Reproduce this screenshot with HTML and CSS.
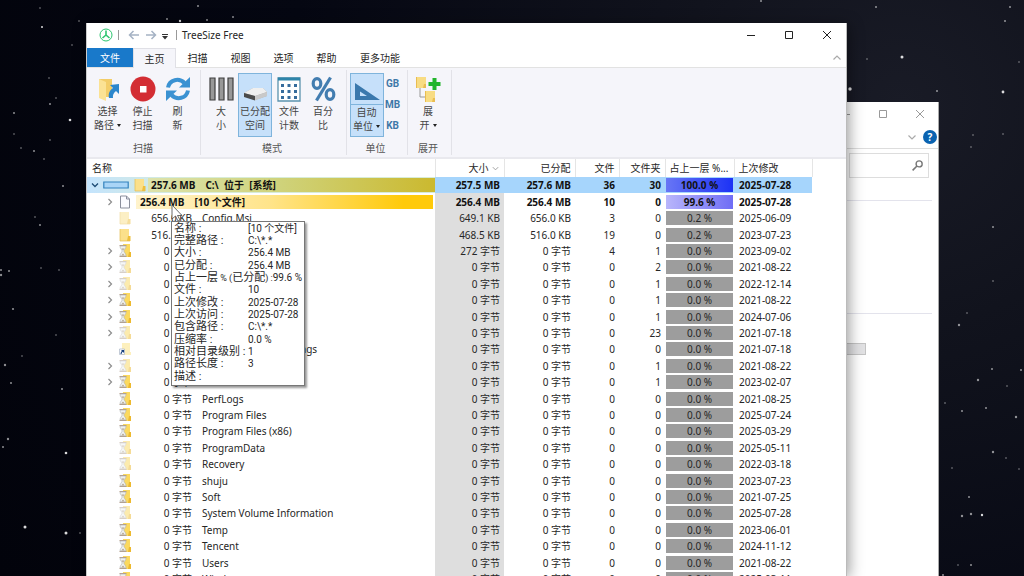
FILE: index.html
```html
<!DOCTYPE html>
<html lang="zh-CN">
<head>
<meta charset="utf-8">
<title>TreeSize Free</title>
<link rel="stylesheet" href="styles.css">
</head>
<body>
<svg class="defs" width="0" height="0" aria-hidden="true">
  <symbol id="folder" viewBox="0 0 12 14"><path d="M1 1h9v12H1z" fill="#fbe08a"/><path d="M9 8h2.500v5H8z" fill="#eebf3c"/><path d="M1 1v12h10" fill="none" stroke="#e5bd50" stroke-width=".7"/></symbol>
  <symbol id="wait" viewBox="0 0 14 14"><path d="M5 0h7v9h1v4H4z" fill="#fbd95f"/><path d="M11 8h2v5h-3z" fill="#edb92f"/><path d="M1.500 1.500h7M1.500 12.500h7" stroke="#b49c88" stroke-width="1"/><path d="M2 2h6c0 2.500-1.800 3.500-2.200 5C6.200 8.500 8 9.500 8 12H2c0-2.500 1.800-3.500 2.200-5C3.800 5.500 2 4.500 2 2z" fill="#eef0f0" stroke="#abb0b0" stroke-width=".6"/><path d="M3.500 4.500h3L5 6.500zM3.300 11.500L5 9.500l1.700 2z" fill="#b5a590"/></symbol>
  <symbol id="page" viewBox="0 0 12 14"><path d="M1.500 1h6l3 3v9h-9z" fill="#fbfbff" stroke="#8b8f9c"/><path d="M7.500 1v3h3" fill="none" stroke="#8b8f9c"/></symbol>
  <symbol id="link" viewBox="0 0 14 14"><path d="M4 1h8v9h1v3H4z" fill="#fdf0be"/><path d="M1.500 7h5v5.500h-5z" fill="#fff" stroke="#a9b5c5" stroke-width=".7"/><path d="M3 12c0-2 .5-2.500 2-3M3.500 8.500h2v2" fill="none" stroke="#17407f" stroke-width="1.100"/></symbol>
  <symbol id="chev" viewBox="0 0 10 10"><path d="M3.500 2l3 3-3 3" fill="none" stroke="#8d8d8d" stroke-width="1.200"/></symbol>
  <symbol id="min" viewBox="0 0 10 10"><path d="M1 5.500h8" stroke="currentColor"/></symbol>
  <symbol id="max" viewBox="0 0 10 10"><path d="M1.500 1.500h7v7h-7z" fill="none" stroke="currentColor"/></symbol>
  <symbol id="close" viewBox="0 0 10 10"><path d="M1 1l8 8M9 1L1 9" stroke="currentColor"/></symbol>
</svg>

<div class="desktop">
<svg class="stars" aria-hidden="true" fill="#fff">
  <g opacity=".85"><circle cx="42" cy="27" r="1"/><circle cx="70" cy="120" r="1.300"/><circle cx="66" cy="453" r="1.300"/><circle cx="25" cy="527" r="1.500"/><circle cx="66" cy="533" r="1.500"/><circle cx="180" cy="21" r="1.200"/><circle cx="902" cy="57" r="1.500"/><circle cx="850" cy="89" r="1.700"/><circle cx="1003" cy="92" r="1.400"/><circle cx="982" cy="515" r="1.200"/></g>
  <g opacity=".55"><circle cx="14" cy="113" r="1"/><circle cx="50" cy="104" r="1"/><circle cx="50" cy="140" r=".8"/><circle cx="34" cy="151" r="1"/><circle cx="21" cy="148" r=".8"/><circle cx="44" cy="159" r=".8"/><circle cx="63" cy="186" r="1"/><circle cx="35" cy="217" r=".8"/><circle cx="40" cy="225" r="1"/><circle cx="9" cy="271" r="1"/><circle cx="1" cy="270" r="1"/><circle cx="1" cy="275" r="1.200"/><circle cx="13" cy="309" r="1.100"/><circle cx="5" cy="365" r="1.200"/><circle cx="11" cy="383" r="1"/><circle cx="62" cy="389" r="1"/><circle cx="8" cy="439" r="1.200"/><circle cx="3" cy="447" r="1"/><circle cx="80" cy="533" r=".8"/><circle cx="79" cy="21" r=".8"/><circle cx="167" cy="19" r="1"/><circle cx="198" cy="6" r="1"/><circle cx="207" cy="20" r="1"/><circle cx="233" cy="17" r="1"/><circle cx="761" cy="1" r="1"/><circle cx="876" cy="7" r="1"/><circle cx="1010" cy="7" r="1"/><circle cx="1005" cy="21" r="1"/><circle cx="937" cy="91" r="1"/><circle cx="993" cy="227" r="1"/><circle cx="993" cy="281" r=".8"/><circle cx="959" cy="325" r="1.200"/><circle cx="992" cy="369" r="1"/><circle cx="1021" cy="370" r="1"/><circle cx="978" cy="380" r="1.200"/><circle cx="945" cy="403" r=".8"/><circle cx="962" cy="411" r="1"/><circle cx="986" cy="408" r="1"/><circle cx="1016" cy="417" r="1.200"/><circle cx="993" cy="452" r="1.200"/><circle cx="969" cy="497" r="1"/><circle cx="962" cy="516" r="1.200"/><circle cx="971" cy="514" r="1.200"/><circle cx="971" cy="565" r="1"/><circle cx="943" cy="575" r="1"/></g>
  <g opacity=".3"><circle cx="14" cy="134" r="1"/><circle cx="56" cy="98" r="1"/><circle cx="49" cy="78" r="1"/><circle cx="72" cy="45" r="1"/><circle cx="41" cy="268" r="1"/><circle cx="59" cy="270" r="1"/><circle cx="56" cy="335" r="1"/><circle cx="22" cy="356" r="1"/><circle cx="40" cy="8" r="1"/><circle cx="867" cy="59" r="1"/><circle cx="973" cy="135" r="1"/><circle cx="1003" cy="134" r="1"/><circle cx="971" cy="147" r="1"/><circle cx="1019" cy="62" r="1"/><circle cx="967" cy="313" r="1"/><circle cx="1007" cy="386" r="1"/><circle cx="952" cy="468" r="1"/><circle cx="1006" cy="458" r="1"/><circle cx="958" cy="565" r="1"/><circle cx="1019" cy="469" r="1"/></g>
</svg>

<section class="window explorer" aria-label="资源管理器">
  <div class="explorer-title">
    <button class="win-btn" aria-label="最小化"><svg><use href="#min"/></svg></button>
    <button class="win-btn" aria-label="最大化"><svg><use href="#max"/></svg></button>
    <button class="win-btn" aria-label="关闭"><svg><use href="#close"/></svg></button>
  </div>
  <div class="explorer-tools">
    <svg class="tiny" viewBox="0 0 10 10"><path d="M1.500 3.500L5 7l3.500-3.500" fill="none" stroke="#aaa" stroke-width="1.200"/></svg>
    <button class="help" aria-label="帮助">?</button>
  </div>
  <div class="explorer-search">
    <label class="search-box"><input type="text" aria-label="搜索"><svg viewBox="0 0 12 12"><circle cx="7.500" cy="4.500" r="2.800" fill="none" stroke="#777" stroke-width="1.300"/><path d="M5.500 6.500L1.500 10.500" stroke="#777" stroke-width="1.500"/></svg></label>
  </div>
  <div class="pane pane-top"></div>
  <div class="pane pane-mid"></div>
  <div class="pane-block"></div>
</section>

<main class="window treesize">
  <header class="titlebar">
    <svg class="logo" viewBox="0 0 14 14" fill="none" stroke="#2cc56f"><circle cx="7" cy="7" r="6"/><path d="M7 2.500V7l-3.500 3M7 7l3.500 3" stroke-width="1.600"/></svg>
    <span class="sep"></span>
    <button class="nav" aria-label="后退"><svg viewBox="0 0 12 10"><path d="M11 5H1.500M5.500 1L1.500 5l4 4" fill="none" stroke="#a5b2c4" stroke-width="1.500"/></svg></button>
    <button class="nav" aria-label="前进"><svg viewBox="0 0 12 10"><path d="M1 5h9.500M6.500 1l4 4-4 4" fill="none" stroke="#a5b2c4" stroke-width="1.500"/></svg></button>
    <button class="quick" aria-label="自定义快速访问"><svg viewBox="0 0 6 6"><path d="M0 .5h6" stroke="#333"/><path d="M0 2h6L3 5.500z" fill="#333"/></svg></button>
    <span class="sep"></span>
    <h1 class="app-name">TreeSize Free</h1>
    <div class="win-btns">
      <button class="win-btn" aria-label="最小化"><svg><use href="#min"/></svg></button>
      <button class="win-btn" aria-label="最大化"><svg><use href="#max"/></svg></button>
      <button class="win-btn" aria-label="关闭"><svg><use href="#close"/></svg></button>
    </div>
  </header>
  <nav class="tabs">
    <button class="tab file">文件</button>
    <button class="tab active">主页</button>
    <button class="tab">扫描</button>
    <button class="tab">视图</button>
    <button class="tab">选项</button>
    <button class="tab">帮助</button>
    <button class="tab wide">更多功能</button>
    <button class="collapse" aria-label="折叠功能区"><svg class="tiny" viewBox="0 0 10 10"><path d="M1.500 6.500L5 3l3.500 3.500" fill="none" stroke="#aaa" stroke-width="1.200"/></svg></button>
  </nav>
  <div class="ribbon">
    <div class="group scan">
      <div class="tools">
        <button class="tool"><svg viewBox="0 0 26 26"><path d="M4 3h13v18H4z" fill="#f3cd68"/><path d="M4 3l7 3v19l-7-3z" fill="#fbe294"/><path d="M24 8v10l-3-3c-2.500 2-3.500 4-3 7h-4c-1-5 1-8 4-10l-3-3z" fill="#2b86cc"/></svg><span>选择<br>路径<i class="drop"></i></span></button>
        <button class="tool"><svg viewBox="0 0 26 26"><circle cx="13" cy="13" r="12.500" fill="#d32d33"/><path d="M10 10h6.500v6.500H10z" fill="#fff"/></svg><span>停止<br>扫描</span></button>
        <button class="tool"><svg viewBox="0 0 26 26"><g fill="none" stroke="#3b92d2" stroke-width="4"><path d="M3 11.500C4.500 3.500 14 1.500 19.500 7"/><path d="M23 14.500C21.500 22.500 12 24.500 6.500 19"/></g><path d="M25 1v10.500H14zM1 25V14.500h11z" fill="#3b92d2"/></svg><span>刷<br>新</span></button>
      </div>
      <div class="caption">扫描</div>
    </div>
    <div class="group mode">
      <div class="tools">
        <button class="tool"><svg viewBox="0 0 26 26"><g fill="#989898" stroke="#3f3f3f" stroke-width="1.200"><path d="M2 2h5v22H2zM11 2h5v22h-5zM20 2h5v22h-5z"/></g></svg><span>大<br>小</span></button>
        <button class="tool on"><svg viewBox="0 0 26 26"><path d="M2 17l9-5h10l4 4v4l-12 4-11-4z" fill="#a8a8a8"/><path d="M2 17l9-5h10l4 4-12 4z" fill="#efefef"/><path d="M2 17l11 3v4.500L2 21z" fill="#4b4b4b"/><path d="M13 20l12-4v4l-12 4.500z" fill="#c9c9c9"/></svg><span>已分配<br>空间</span></button>
        <button class="tool"><svg viewBox="0 0 26 26"><path d="M2 2h22v23H2z" fill="#fff" stroke="#5b93ae" stroke-width="1.300"/><path d="M2 1.500h22v3H2z" fill="#2e84a9"/><path d="M5 8h3v3H5zM11.500 8h3v3h-3zM18 8h3v3h-3zM5 14h3v3H5zM11.500 14h3v3h-3zM18 14h3v3h-3zM5 20h3v3H5zM11.500 20h3v3h-3zM18 20h3v3h-3z" fill="#366c9c"/></svg><span>文件<br>计数</span></button>
        <button class="tool"><svg viewBox="0 0 26 26"><g fill="none" stroke="#437db0" stroke-width="3.200"><ellipse cx="7" cy="7.500" rx="3.800" ry="4.800"/><ellipse cx="20" cy="18.500" rx="3.800" ry="4.800"/><path d="M20.500 1.500L6.500 24.500"/></g></svg><span>百分<br>比</span></button>
      </div>
      <div class="caption">模式</div>
    </div>
    <div class="group unit">
      <div class="tools">
        <button class="tool on split"><svg viewBox="0 0 26 26"><path d="M1 7l25 17H1zM6 15.500v4.500h7z" fill="#3a78ad" fill-rule="evenodd"/></svg><span>自动<br>单位<i class="drop"></i></span></button>
        <div class="units"><button>GB</button><button>MB</button><button>KB</button></div>
      </div>
      <div class="caption">单位</div>
    </div>
    <div class="group expand">
      <div class="tools">
        <button class="tool"><svg viewBox="0 0 26 26"><path d="M5 12v9h5" fill="none" stroke="#999"/><path d="M1 1h10v11H1z" fill="#f8dc83"/><path d="M9 8h2v4H8zM1 1h1v11H1z" fill="#e9bd52"/><path d="M10 15h10v11H10z" fill="#f8dc83"/><path d="M18 22h2v4h-3zM10 15h1v11h-1z" fill="#e9bd52"/><path d="M17.500 2h4v4h4v4h-4v4h-4v-4h-4V6h4z" fill="#22b52c"/></svg><span>展<br>开<i class="drop"></i></span></button>
      </div>
      <div class="caption">展开</div>
    </div>
  </div>

  <div class="list">
  <table class="grid">
    <colgroup><col><col class="c-size"><col class="c-alloc"><col class="c-files"><col class="c-dirs"><col class="c-pct"><col class="c-date"><col class="c-rest"></colgroup>
    <thead><tr><th class="left">名称</th><th>大小<svg class="sort" viewBox="0 0 10 10"><path d="M2 3.500l3 3 3-3" fill="none" stroke="#999"/></svg></th><th>已分配</th><th>文件</th><th>文件夹</th><th class="left">占上一层 %...</th><th class="left">上次修改</th><th></th></tr></thead>
    <tbody>
    <tr class="root bold"><td><div class="tree"><svg class="chev" viewBox="0 0 10 10"><path d="M2 3.500l3 3 3-3" fill="none" stroke="#1d4b75" stroke-width="1.300"/></svg><svg class="drive" viewBox="0 0 26 8"><path d="M.8 7V1h24.400v6z" fill="#a9d5f7" stroke="#3282bd" stroke-width="1.200"/></svg><svg class="ico"><use href="#folder"/></svg><div class="bar"><span>257.6 MB</span><span>C:\&nbsp; 位于&nbsp; [系统]</span></div></div></td><td>257.5 MB</td><td>257.6 MB</td><td>36</td><td>30</td><td class="pct"><div>100.0 %</div></td><td>2025-07-28</td><td></td></tr>
    <tr class="files bold"><td><div class="tree"><svg class="chev"><use href="#chev"/></svg><svg class="ico"><use href="#page"/></svg><div class="bar"><span>256.4 MB</span><span>[10 个文件]</span></div></div></td><td>256.4 MB</td><td>256.4 MB</td><td>10</td><td>0</td><td class="pct"><div>99.6 %</div></td><td>2025-07-28</td><td></td></tr>
    <tr><td><div class="tree"><i class="chev"></i><svg class="ico faded"><use href="#folder"/></svg><span class="amt">656.0 KB</span><span>Config.Msi</span></div></td><td>649.1 KB</td><td>656.0 KB</td><td>3</td><td>0</td><td class="pct"><div>0.2 %</div></td><td>2025-06-09</td><td></td></tr>
    <tr><td><div class="tree"><i class="chev"></i><svg class="ico"><use href="#folder"/></svg><span class="amt">516.0 KB</span></div></td><td>468.5 KB</td><td>516.0 KB</td><td>19</td><td>0</td><td class="pct"><div>0.2 %</div></td><td>2023-07-23</td><td></td></tr>
    <tr><td><div class="tree"><svg class="chev"><use href="#chev"/></svg><svg class="ico"><use href="#wait"/></svg><span class="amt">0 字节</span></div></td><td>272 字节</td><td>0 字节</td><td>4</td><td>1</td><td class="pct"><div>0.0 %</div></td><td>2023-09-02</td><td></td></tr>
    <tr><td><div class="tree"><svg class="chev"><use href="#chev"/></svg><svg class="ico faded"><use href="#wait"/></svg><span class="amt">0 字节</span></div></td><td>0 字节</td><td>0 字节</td><td>0</td><td>2</td><td class="pct"><div>0.0 %</div></td><td>2021-08-22</td><td></td></tr>
    <tr><td><div class="tree"><svg class="chev"><use href="#chev"/></svg><svg class="ico faded"><use href="#wait"/></svg><span class="amt">0 字节</span></div></td><td>0 字节</td><td>0 字节</td><td>0</td><td>1</td><td class="pct"><div>0.0 %</div></td><td>2022-12-14</td><td></td></tr>
    <tr><td><div class="tree"><svg class="chev"><use href="#chev"/></svg><svg class="ico"><use href="#wait"/></svg><span class="amt">0 字节</span></div></td><td>0 字节</td><td>0 字节</td><td>0</td><td>1</td><td class="pct"><div>0.0 %</div></td><td>2021-08-22</td><td></td></tr>
    <tr><td><div class="tree"><svg class="chev"><use href="#chev"/></svg><svg class="ico"><use href="#wait"/></svg><span class="amt">0 字节</span></div></td><td>0 字节</td><td>0 字节</td><td>0</td><td>1</td><td class="pct"><div>0.0 %</div></td><td>2024-07-06</td><td></td></tr>
    <tr><td><div class="tree"><svg class="chev"><use href="#chev"/></svg><svg class="ico faded"><use href="#wait"/></svg><span class="amt">0 字节</span></div></td><td>0 字节</td><td>0 字节</td><td>0</td><td>23</td><td class="pct"><div>0.0 %</div></td><td>2021-07-18</td><td></td></tr>
    <tr><td><div class="tree"><i class="chev"></i><svg class="ico"><use href="#link"/></svg><span class="amt">0 字节</span><span>Documents and Settings</span></div></td><td>0 字节</td><td>0 字节</td><td>0</td><td>0</td><td class="pct"><div>0.0 %</div></td><td>2021-07-18</td><td></td></tr>
    <tr><td><div class="tree"><svg class="chev"><use href="#chev"/></svg><svg class="ico faded"><use href="#wait"/></svg><span class="amt">0 字节</span></div></td><td>0 字节</td><td>0 字节</td><td>0</td><td>1</td><td class="pct"><div>0.0 %</div></td><td>2021-08-22</td><td></td></tr>
    <tr><td><div class="tree"><svg class="chev"><use href="#chev"/></svg><svg class="ico"><use href="#wait"/></svg><span class="amt">0 字节</span></div></td><td>0 字节</td><td>0 字节</td><td>0</td><td>1</td><td class="pct"><div>0.0 %</div></td><td>2023-02-07</td><td></td></tr>
    <tr><td><div class="tree"><i class="chev"></i><svg class="ico"><use href="#wait"/></svg><span class="amt">0 字节</span><span>PerfLogs</span></div></td><td>0 字节</td><td>0 字节</td><td>0</td><td>0</td><td class="pct"><div>0.0 %</div></td><td>2021-08-25</td><td></td></tr>
    <tr><td><div class="tree"><i class="chev"></i><svg class="ico"><use href="#wait"/></svg><span class="amt">0 字节</span><span>Program Files</span></div></td><td>0 字节</td><td>0 字节</td><td>0</td><td>0</td><td class="pct"><div>0.0 %</div></td><td>2025-07-24</td><td></td></tr>
    <tr><td><div class="tree"><i class="chev"></i><svg class="ico"><use href="#wait"/></svg><span class="amt">0 字节</span><span>Program Files (x86)</span></div></td><td>0 字节</td><td>0 字节</td><td>0</td><td>0</td><td class="pct"><div>0.0 %</div></td><td>2025-03-29</td><td></td></tr>
    <tr><td><div class="tree"><i class="chev"></i><svg class="ico faded"><use href="#wait"/></svg><span class="amt">0 字节</span><span>ProgramData</span></div></td><td>0 字节</td><td>0 字节</td><td>0</td><td>0</td><td class="pct"><div>0.0 %</div></td><td>2025-05-11</td><td></td></tr>
    <tr><td><div class="tree"><i class="chev"></i><svg class="ico faded"><use href="#wait"/></svg><span class="amt">0 字节</span><span>Recovery</span></div></td><td>0 字节</td><td>0 字节</td><td>0</td><td>0</td><td class="pct"><div>0.0 %</div></td><td>2022-03-18</td><td></td></tr>
    <tr><td><div class="tree"><i class="chev"></i><svg class="ico"><use href="#wait"/></svg><span class="amt">0 字节</span><span>shuju</span></div></td><td>0 字节</td><td>0 字节</td><td>0</td><td>0</td><td class="pct"><div>0.0 %</div></td><td>2023-07-23</td><td></td></tr>
    <tr><td><div class="tree"><i class="chev"></i><svg class="ico"><use href="#wait"/></svg><span class="amt">0 字节</span><span>Soft</span></div></td><td>0 字节</td><td>0 字节</td><td>0</td><td>0</td><td class="pct"><div>0.0 %</div></td><td>2021-07-25</td><td></td></tr>
    <tr><td><div class="tree"><i class="chev"></i><svg class="ico faded"><use href="#wait"/></svg><span class="amt">0 字节</span><span>System Volume Information</span></div></td><td>0 字节</td><td>0 字节</td><td>0</td><td>0</td><td class="pct"><div>0.0 %</div></td><td>2025-07-28</td><td></td></tr>
    <tr><td><div class="tree"><i class="chev"></i><svg class="ico"><use href="#wait"/></svg><span class="amt">0 字节</span><span>Temp</span></div></td><td>0 字节</td><td>0 字节</td><td>0</td><td>0</td><td class="pct"><div>0.0 %</div></td><td>2023-06-01</td><td></td></tr>
    <tr><td><div class="tree"><i class="chev"></i><svg class="ico"><use href="#wait"/></svg><span class="amt">0 字节</span><span>Tencent</span></div></td><td>0 字节</td><td>0 字节</td><td>0</td><td>0</td><td class="pct"><div>0.0 %</div></td><td>2024-11-12</td><td></td></tr>
    <tr><td><div class="tree"><i class="chev"></i><svg class="ico"><use href="#wait"/></svg><span class="amt">0 字节</span><span>Users</span></div></td><td>0 字节</td><td>0 字节</td><td>0</td><td>0</td><td class="pct"><div>0.0 %</div></td><td>2021-08-22</td><td></td></tr>
    <tr><td><div class="tree"><i class="chev"></i><svg class="ico"><use href="#wait"/></svg><span class="amt">0 字节</span><span>Windows</span></div></td><td>0 字节</td><td>0 字节</td><td>0</td><td>0</td><td class="pct"><div>0.0 %</div></td><td>2025-03-11</td><td></td></tr>
    </tbody>
  </table>
  </div>
</main>

<svg class="cursor" viewBox="0 0 12 18" aria-hidden="true"><path d="M1 1v14l3.500-3 2.500 5 2-1-2.500-4.500H11z" fill="#fff" stroke="#444" stroke-width=".8"/></svg>
<dl class="tip" role="tooltip">
  <div><dt>名称 :</dt><dd>[10 个文件]</dd></div>
  <div><dt>完整路径 :</dt><dd>C:\*.*</dd></div>
  <div><dt>大小 :</dt><dd>256.4 MB</dd></div>
  <div><dt>已分配 :</dt><dd>256.4 MB</dd></div>
  <div><dt>占上一层<small> % (</small>已分配<small>) :</small></dt><dd>99.6 %</dd></div>
  <div><dt>文件 :</dt><dd>10</dd></div>
  <div><dt>上次修改 :</dt><dd>2025-07-28</dd></div>
  <div><dt>上次访问 :</dt><dd>2025-07-28</dd></div>
  <div><dt>包含路径 :</dt><dd>C:\*.*</dd></div>
  <div><dt>压缩率 :</dt><dd>0.0 %</dd></div>
  <div><dt>相对目录级别 :</dt><dd>1</dd></div>
  <div><dt>路径长度 :</dt><dd>3</dd></div>
  <div><dt>描述 :</dt><dd></dd></div>
</dl>
</div>
</body>
</html>
```
FILE: styles.css
```css
* { box-sizing: border-box; }
body { margin: 0; font: 10px/14px "Noto Sans", "Noto Sans CJK SC", sans-serif; color: #262626; }
button { margin: 0; padding: 0; border: 0; background: none; font: inherit; color: inherit; }
.defs { position: absolute; }

.desktop { position: relative; height: 100vh; overflow: hidden; background: radial-gradient(circle at 88% 18%, #191b26 0, #11131d 22%, #050712 60%, #02030b 100%); }
.stars { position: absolute; inset: 0; width: 100%; height: 100%; }

.window { position: absolute; bottom: 0; display: flex; flex-direction: column; background: #fff; overflow: hidden; }
.treesize { left: 86px; right: 177px; top: 23px; border-left: 1px solid #ccc; border-right: 1px solid #bbb; box-shadow: 2px 2px 14px rgba(0, 0, 0, .4); }
.explorer { left: 700px; right: 85px; top: 102px; border-right: 1px solid #aaa; }

/* window controls */
.win-btns, .explorer-title { display: flex; }
.win-btns { margin-left: auto; }
.win-btn { width: 38px; height: 24px; display: grid; place-items: center; color: #222; }
.win-btn svg { width: 10px; height: 10px; }
.tiny { width: 10px; height: 10px; display: block; }

/* background window */
.explorer-title, .explorer-tools { justify-content: flex-end; }
.explorer-title .win-btn { width: 37px; color: #999; }
.explorer-tools { display: flex; align-items: center; gap: 6px; height: 23px; padding-right: 1px; border-bottom: 1px solid #ddd; }
.help { width: 14px; height: 14px; border-radius: 50%; background: #0a63b1; color: #fff; font-weight: 700; line-height: 14px; }
.explorer-search { display: flex; justify-content: flex-end; padding: 4px 9px 0 0; }
.search-box { display: flex; align-items: center; width: 80px; height: 25px; padding: 0 4px; border: 1px solid #ddd; }
.search-box input { flex: 1; min-width: 0; border: 0; background: none; }
.search-box svg { width: 13px; height: 13px; }
.pane { margin-right: 6px; border-bottom: 1px solid #e3e3ec; }
.pane-top { height: 23px; }
.pane-mid { height: 113px; }
.pane-block { width: 166px; height: 12px; margin-top: 29px; border: 1px solid #c4c4c4; background: #e2e2e4; flex: none; }

/* title bar */
.titlebar { display: flex; align-items: center; height: 24px; padding-left: 12px; flex: none; }
.logo { width: 14px; height: 14px; }
.sep { width: 1px; height: 10px; background: #999; margin: 0 9px 0 5px; }
.nav { width: 12px; height: 10px; margin-right: 5px; }
.nav svg, .quick svg { display: block; width: 100%; height: 100%; }
.quick { width: 6px; height: 6px; margin: 3px 3px 0 0; }
.app-name { margin: 0; font-size: 10px; font-weight: 400; }
.titlebar .sep + .app-name { margin-left: -4px; }

/* tabs */
.tabs { display: flex; height: 21px; flex: none; padding-top: 1px; border-bottom: 1px solid #e2e2e2; }
.tab { width: 43px; }
.tab.file { width: 46px; background: #1979ca; color: #fff; }
.tab.active { height: 20px; border: 1px solid #e0e0e6; border-bottom: 0; background: #f5f5fa; }
.tab.wide { width: 64px; }
.collapse { margin-left: auto; padding-right: 4px; }

/* ribbon */
.ribbon { display: flex; height: 91px; flex: none; padding: 2px 0; background: #f5f5fa; border-bottom: 2px solid #e9e9ee; }
.group { display: flex; flex-direction: column; align-items: center; padding: 3px 6px 0 3px; border-right: 1px solid #e2e2e8; }
.group.scan { width: 114px; align-items: flex-start; }
.group.scan .caption { padding-left: 43px; }
.group.mode { width: 146px; }
.group.unit { width: 61px; }
.group.expand { width: 44px; }
.tools { display: flex; height: 64px; }
.tool { display: flex; flex-direction: column; align-items: center; width: 34px; border: 1px solid transparent; color: #444; white-space: nowrap; }
.scan .tool { width: 35px; }
.tool svg { width: 26px; height: 26px; margin: 2px 0 2px; flex: none; }
.tool.on { background: #c6e0fa; border-color: #7fb4dc; }
.tool.split span { width: 100%; border-top: 1px solid #7fb4dc; }
.caption { margin-top: 4px; color: #555; }
.drop { display: inline-block; margin: 0 0 2px 3px; border: 2px solid transparent; border-top: 3px solid #222; border-bottom: 0; }
.units { display: flex; flex-direction: column; justify-content: space-around; align-items: center; width: 18px; color: #3f78a8; font: 700 10px/14px Roboto, sans-serif; }

/* file table */
.list { flex: 1; min-height: 0; overflow: hidden; padding-right: 2px; }
.grid { width: 100%; table-layout: fixed; border-collapse: collapse; }
.c-size { width: 69px; }
.c-alloc { width: 71px; }
.c-files { width: 44px; }
.c-dirs { width: 46px; }
.c-pct { width: 69px; }
.c-date { width: 78px; }
.c-rest { width: 32px; }
.grid th { height: 18px; padding: 0 4px; font-weight: 400; text-align: right; border-right: 1px solid #e5e5e5; white-space: nowrap; }
.grid th.left { text-align: left; }
.grid th:first-child { padding-left: 5px; }
.grid th:last-child { border-right: 0; }
.sort { width: 9px; height: 9px; margin-left: 2px; vertical-align: -1px; }
.grid td { height: 16px; padding: 0 4px; text-align: right; white-space: nowrap; }
.grid tr:nth-child(5n + 2) td, .grid tr:nth-child(5n + 4) td { height: 17px; }
.grid td:first-child { padding: 0; text-align: left; }
.grid td:nth-child(2) { background: #dedede; }
.grid td:nth-child(7) { text-align: left; padding-left: 5px; }
.grid td.pct { padding: 0 1px; text-align: center; }
.pct div { height: 14px; line-height: 14px; background: #9d9d9d; }
.grid .bold td { font-weight: 700; color: #111; }
.grid .root td { background: #a6d5fc; }
.grid .root td:last-child { background: #fff; }
.root .pct div { background: linear-gradient(90deg, #6876f5, #1c32f5); }
.files .pct div { background: linear-gradient(90deg, #b9b6fb, #6f6df5); }

.tree { display: flex; align-items: center; height: 16px; padding-left: 18px; }
.chev { width: 10px; height: 10px; margin-right: 3px; flex: none; }
.ico { width: 14px; height: 14px; flex: none; }
.faded { opacity: .5; }
.amt { width: 60px; margin-right: 10px; text-align: right; }
.root .tree { padding-left: 3px; background: linear-gradient(90deg, #c4e4fd, #d8ecd8 30%); }
.drive { width: 26px; height: 8px; margin-right: 4px; }
.bar { display: flex; gap: 10px; flex: 1; height: 14px; margin: 0 2px 0 4px; padding-left: 4px; background: linear-gradient(90deg, #fff3cc, #ffe48a 45%, #ffca0a 90%); }
.root .bar { margin: 0 0 0 1px; padding-left: 3px; background: linear-gradient(90deg, #dde3ac, #cfd37c 45%, #cbb92f); }

.cursor { position: absolute; left: 171px; top: 204px; width: 12px; height: 18px; }
.tip { position: absolute; left: 171px; top: 221px; width: 134px; margin: 0; padding: 1px 2px 2px; background: #fff; border: 1px solid #777; box-shadow: 2px 2px 2px rgba(0, 0, 0, .4); font: 11px/12px Roboto, "Noto Sans CJK SC", sans-serif; white-space: nowrap; }
.tip div { display: flex; height: 12px; }
.tip div:nth-child(3n) { height: 13px; }
.tip dt { flex: none; min-width: 74px; }
.tip small { font-size: 9px; }
.tip dd { margin: 0; font-size: 10px; }
```
